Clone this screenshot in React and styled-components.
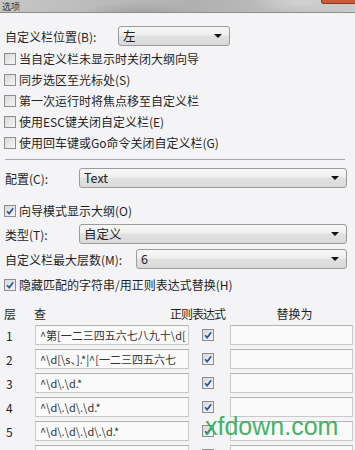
import React from 'react'
import styled, { createGlobalStyle } from 'styled-components'

const Global = createGlobalStyle`
  html, body {
    margin: 0;
    padding: 0;
    background: #f4f4f6;
  }
  body {
    font-family: "Noto Sans CJK SC", "Noto Sans", sans-serif;
    font-size: 12px;
    color: #1f1f1f;
  }
`

const Window = styled.div`
  position: relative;
  width: 355px;
  height: 450px;
  overflow: hidden;
  background: #f4f4f6;
`

const TitleBar = styled.div`
  height: 12px;
  display: flex;
  align-items: center;
  border-bottom: 1px solid #8c8c8c;
  background:
    radial-gradient(ellipse 60px 10px at 140px 12px, #a4a4a4, transparent),
    radial-gradient(ellipse 50px 12px at 300px 2px, #d2d2d2, transparent),
    linear-gradient(to right, #c6c6c6, #bababa 30%, #b0b0b0 55%, #bdbdbd 80%, #cbcbcb);
`

const Caption = styled.span`
  padding-left: 2px;
  font-size: 9px;
  color: #333;
  line-height: 11px;
`

const CloseButton = styled.div`
  align-self: flex-start;
  margin-left: auto;
  width: 33px;
  height: 3px;
  background: #c95a3a;
  border: 1px solid #8a3a22;
  border-top: none;
  border-right: none;
  border-radius: 0 0 0 3px;
`

const Content = styled.div`
  padding: 0 8px 0 4px;
`

const FieldRow = styled.div`
  display: flex;
  align-items: center;
  height: 20px;
  margin-top: ${p => p.$top}px;
`

const Label = styled.div`
  width: ${p => p.$w}px;
  flex: none;
  white-space: nowrap;
  padding-left: 1px;
`

const SelectBox = styled.div`
  position: relative;
  box-sizing: border-box;
  height: 20px;
  width: ${p => (p.$w ? `${p.$w}px` : 'auto')};
  flex: ${p => (p.$w ? 'none' : '1')};
  border: 1px solid #9c9c9c;
  border-radius: 3px;
  background: linear-gradient(#f7f7f7 0%, #efefef 45%, #e0e0e0 50%, #dadada 100%);
  padding-left: 4px;
  font-size: 12.5px;
  line-height: 18px;
  color: #222;

  &::after {
    content: '';
    position: absolute;
    right: 7px;
    top: 7px;
    border-left: 4px solid transparent;
    border-right: 4px solid transparent;
    border-top: 4px solid #111;
  }
`

const CheckRow = styled.label`
  display: flex;
  align-items: center;
  gap: 3px;
  height: 21px;
  margin-top: ${p => p.$top || 0}px;
  white-space: nowrap;
`

const Box = styled.span`
  box-sizing: border-box;
  width: 12px;
  height: 12px;
  flex: none;
  border: 1px solid #8e8e8e;
  background: linear-gradient(135deg, #d8d8d8, #f6f6f6);
  display: inline-flex;
  align-items: center;
  justify-content: center;
`

const Separator = styled.div`
  margin: 6px 0 0 1px;
  height: 1px;
  background: #a9a9a9;
  width: 340px;
`

const TableHead = styled.div`
  display: grid;
  grid-template-columns: 30px 136px 66px 1fr;
  align-items: center;
  height: 18px;
  margin-top: 9px;
  margin-right: -6px;

  span:nth-child(3) {
    letter-spacing: -1px;
  }
  span:last-child {
    text-align: center;
  }
`

const TableRow = styled.div`
  display: grid;
  grid-template-columns: 31px 154px 41px 1fr;
  align-items: center;
  height: 24px;
  margin-right: -6px;
`

const Num = styled.span`
  padding-left: 2px;
  font-size: 12px;
`

const TextInput = styled.div`
  box-sizing: border-box;
  height: 20px;
  border: 1px solid #c9c9c9;
  border-top-color: #b4b4b4;
  background: #fafafa;
  padding-left: 4px;
  font-size: 11px;
  line-height: 18px;
  color: #333;
  white-space: nowrap;
  overflow: hidden;
`

const BoxCell = styled.div`
  display: flex;
  padding-left: 13px;
`

const Watermark = styled.div`
  position: absolute;
  left: 205px;
  top: 414px;
  font-family: "Liberation Sans", Arial, sans-serif;
  font-size: 25px;
  line-height: 25px;
  color: #36ad58;
  opacity: 0.92;
`

function Check({ checked }) {
  return (
    <Box>
      {checked && (
        <svg width="10" height="10" viewBox="0 0 10 10">
          <path d="M2 5.2 L4.2 7.6 L8.2 2.2" fill="none" stroke="#2b55a8" strokeWidth="1.7" />
        </svg>
      )}
    </Box>
  )
}

const options = [
  '当自定义栏未显示时关闭大纲向导',
  '同步选区至光标处(S)',
  '第一次运行时将焦点移至自定义栏',
  '使用ESC键关闭自定义栏(E)',
  '使用回车键或Go命令关闭自定义栏(G)',
]

const rules = [
  '^第[一二三四五六七八九十\\d[',
  '^\\d[\\s、].*|^[一二三四五六七',
  '^\\d\\.\\d.*',
  '^\\d\\.\\d\\.\\d.*',
  '^\\d\\.\\d\\.\\d\\.\\d.*',
  '',
]

export default function App() {
  return (
    <Window>
      <Global />
      <TitleBar>
        <Caption>选项</Caption>
        <CloseButton />
      </TitleBar>
      <Content>
        <FieldRow $top={13}>
          <Label $w={113}>自定义栏位置(B):</Label>
          <SelectBox $w={112}>左</SelectBox>
        </FieldRow>
        <div style={{ marginTop: 2 }}>
          {options.map(t => (
            <CheckRow key={t}>
              <Check />
              {t}
            </CheckRow>
          ))}
        </div>
        <Separator />
        <FieldRow $top={8}>
          <Label $w={74}>配置(C):</Label>
          <SelectBox>Text</SelectBox>
        </FieldRow>
        <CheckRow $top={12}>
          <Check checked />
          向导模式显示大纲(O)
        </CheckRow>
        <FieldRow $top={3}>
          <Label $w={74}>类型(T):</Label>
          <SelectBox>自定义</SelectBox>
        </FieldRow>
        <FieldRow $top={5}>
          <Label $w={131}>自定义栏最大层数(M):</Label>
          <SelectBox>6</SelectBox>
        </FieldRow>
        <CheckRow $top={5}>
          <Check checked />
          隐藏匹配的字符串/用正则表达式替换(H)
        </CheckRow>
        <TableHead>
          <span>层</span>
          <span>查</span>
          <span>正则表达式</span>
          <span>替换为</span>
        </TableHead>
        <div style={{ marginTop: 1 }}>
          {rules.map((r, i) => (
            <TableRow key={i}>
              <Num>{i < 5 ? i + 1 : ''}</Num>
              <TextInput>{r}</TextInput>
              <BoxCell>
                <Check checked />
              </BoxCell>
              <TextInput />
            </TableRow>
          ))}
        </div>
      </Content>
      <Watermark>xfdown.com</Watermark>
    </Window>
  )
}
